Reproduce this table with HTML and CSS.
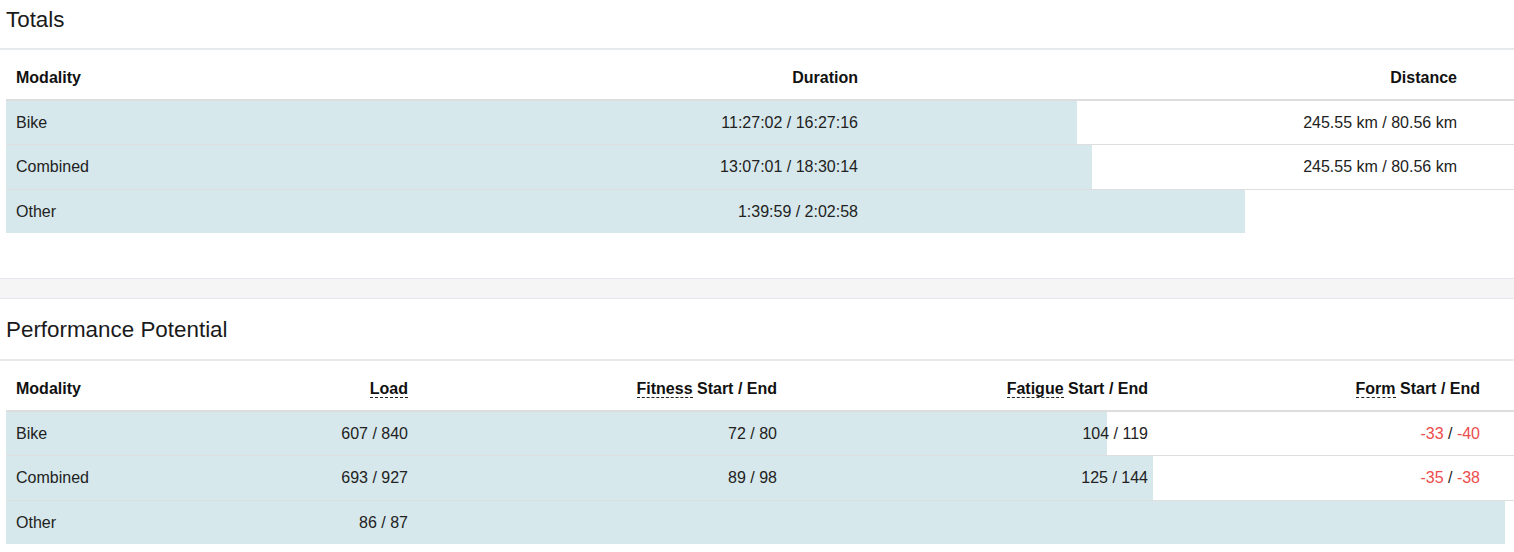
FILE: index.html
```html
<!DOCTYPE html>
<html lang="en">
<head>
<meta charset="utf-8">
<title>Totals</title>
<link rel="stylesheet" href="styles.css">
</head>
<body>
<section class="panel">
  <h2 class="panel-title panel-title--first">Totals</h2>
  <div class="grid grid--totals">
    <div class="row row--head">
      <div class="cell">Modality</div>
      <div class="cell num">Duration</div>
      <div class="cell num">Distance</div>
      <div class="cell"></div>
    </div>
    <div class="row bar" style="--w:71.02%">
      <div class="cell">Bike</div>
      <div class="cell num">11:27:02 / 16:27:16</div>
      <div class="cell num">245.55 km / 80.56 km</div>
      <div class="cell"></div>
    </div>
    <div class="row bar" style="--w:72.02%">
      <div class="cell">Combined</div>
      <div class="cell num">13:07:01 / 18:30:14</div>
      <div class="cell num">245.55 km / 80.56 km</div>
      <div class="cell"></div>
    </div>
    <div class="row bar" style="--w:82.16%">
      <div class="cell">Other</div>
      <div class="cell num">1:39:59 / 2:02:58</div>
      <div class="cell num"></div>
      <div class="cell"></div>
    </div>
  </div>
</section>

<div class="divider"></div>

<section class="panel">
  <h2 class="panel-title">Performance Potential</h2>
  <div class="grid grid--perf">
    <div class="row row--head">
      <div class="cell">Modality</div>
      <div class="cell num"><abbr class="term" title="Training load">Load</abbr></div>
      <div class="cell num"><abbr class="term" title="Chronic training load">Fitness</abbr> Start / End</div>
      <div class="cell num"><abbr class="term" title="Acute training load">Fatigue</abbr> Start / End</div>
      <div class="cell num"><abbr class="term" title="Training stress balance">Form</abbr> Start / End</div>
      <div class="cell"></div>
    </div>
    <div class="row bar" style="--w:73.01%">
      <div class="cell">Bike</div>
      <div class="cell num">607 / 840</div>
      <div class="cell num">72 / 80</div>
      <div class="cell num">104 / 119</div>
      <div class="cell num"><span class="neg">-33</span> / <span class="neg">-40</span></div>
      <div class="cell"></div>
    </div>
    <div class="row bar" style="--w:76.06%">
      <div class="cell">Combined</div>
      <div class="cell num">693 / 927</div>
      <div class="cell num">89 / 98</div>
      <div class="cell num">125 / 144</div>
      <div class="cell num"><span class="neg">-35</span> / <span class="neg">-38</span></div>
      <div class="cell"></div>
    </div>
    <div class="row bar" style="--w:99.4%">
      <div class="cell">Other</div>
      <div class="cell num">86 / 87</div>
      <div class="cell num"></div>
      <div class="cell num"></div>
      <div class="cell num"></div>
      <div class="cell"></div>
    </div>
  </div>
</section>
</body>
</html>
```

FILE: styles.css
```css
html, body {
  margin: 0;
  padding: 0;
  background: #fff;
}

body {
  font-family: "Liberation Sans", Arial, sans-serif;
  font-size: 16px;
  color: #222;
  overflow: hidden;
}

.panel-title {
  margin: 0;
  padding: 18px 6px 16px;
  font-size: 22.4px;
  line-height: 26px;
  font-weight: normal;
  color: #1a1a1a;
  border-bottom: 2px solid #e7eaed;
}

.panel-title--first {
  padding-top: 7px;
  padding-bottom: 15px;
}

.grid {
  margin-left: 6px;
}

.row {
  display: grid;
  border-top: 1px solid #dedede;
}

.grid--totals .row {
  grid-template-columns: 294px 568px 599px 47px;
}

.grid--perf .row {
  grid-template-columns: 194px 218px 369px 371px 332px 24px;
}

.row--head {
  border-top: none;
  border-bottom: 2px solid #dddddd;
  font-weight: bold;
  color: #111;
}

.row--head + .row {
  border-top: none;
}

.cell {
  padding: 10px 10px;
  line-height: 23.33px;
  white-space: nowrap;
}

.row--head .cell {
  padding-top: 16px;
  padding-bottom: 10px;
  line-height: 23px;
}

.num {
  text-align: right;
}

.bar {
  background-image: linear-gradient(to right, #d6e8eb 0, #d6e8eb var(--w), transparent var(--w));
  background-repeat: no-repeat;
}

.term {
  text-decoration: none;
  border-bottom: 1px dashed #222;
  cursor: help;
}

.neg {
  color: #ec4d4d;
}

.divider {
  margin-top: 45px;
  height: 19px;
  background: #f5f5f5;
  border-top: 1px solid #e6e6ee;
  border-bottom: 1px solid #e6e6ee;
}
```
